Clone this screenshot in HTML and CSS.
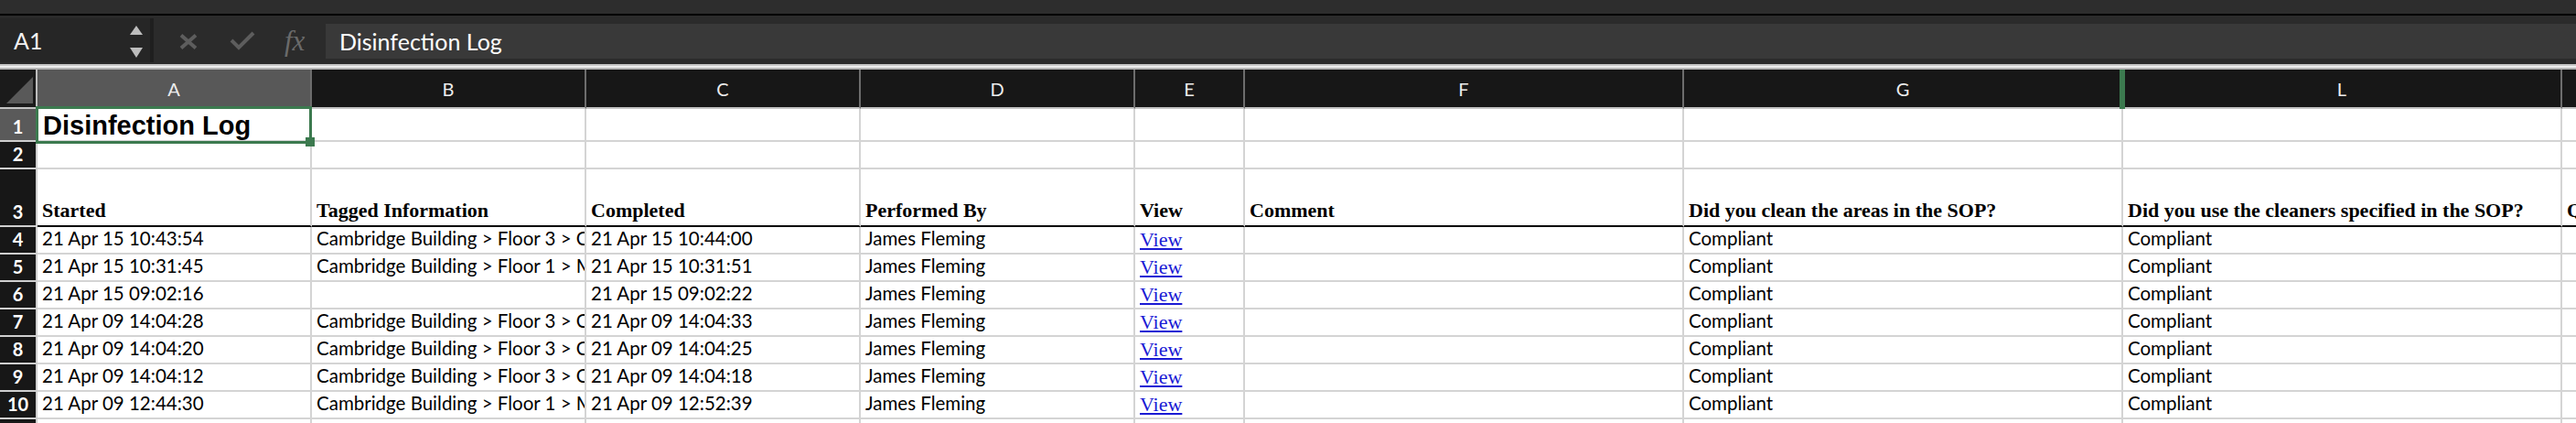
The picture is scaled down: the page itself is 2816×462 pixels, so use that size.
FILE: index.html
```html
<!DOCTYPE html>
<html>
<head>
<meta charset="utf-8">
<title>Disinfection Log</title>
<link rel="stylesheet" href="styles.css">
</head>
<body>
<div class="app">
  <div class="titlebar"></div>
  <div class="formula-bar">
    <div class="namebox">
      <span class="ref">A1</span>
      <svg class="spin" width="16" height="36" viewBox="0 0 16 36"><polygon points="8,0 15,10 1,10" fill="#bdbdbd"/><polygon points="1,24 15,24 8,35" fill="#bdbdbd"/></svg>
    </div>
    <div class="tools">
      <svg class="ico-x" width="20" height="17" viewBox="0 0 20 17"><path d="M2 1.5 L18 15.5 M18 1.5 L2 15.5" stroke="#5d5d5d" stroke-width="4" stroke-linecap="butt"/></svg>
      <svg class="ico-check" width="28" height="21" viewBox="0 0 28 21"><path d="M2 10 L10 18 L26 2" stroke="#5d5d5d" stroke-width="4" fill="none"/></svg>
      <span class="fx">fx</span>
    </div>
    <div class="formula-input">Disinfection Log</div>
  </div>
  <div class="splitter"></div>

  <div class="viewport">
  <div class="sheet">
    <!-- column headers -->
    <div class="corner"><svg width="41" height="41" viewBox="0 0 41 41"><polygon points="7,37 36,37 36,8" fill="#595959"/></svg></div>
    <div class="ch sel">A</div>
    <div class="ch">B</div>
    <div class="ch">C</div>
    <div class="ch">D</div>
    <div class="ch">E</div>
    <div class="ch">F</div>
    <div class="ch">G</div>
    <div class="ch mark">L</div>
    <div class="ch"></div>

    <!-- row 1 -->
    <div class="rh sel">1</div>
    <div class="c title active">Disinfection Log<span class="selbox"></span></div>
    <div class="c"></div><div class="c"></div><div class="c"></div><div class="c"></div><div class="c"></div><div class="c"></div><div class="c"></div><div class="c"></div>

    <!-- row 2 -->
    <div class="rh">2</div>
    <div class="c"></div><div class="c"></div><div class="c"></div><div class="c"></div><div class="c"></div><div class="c"></div><div class="c"></div><div class="c"></div><div class="c"></div>

    <!-- row 3 -->
    <div class="rh">3</div>
    <div class="c h">Started</div>
    <div class="c h">Tagged Information</div>
    <div class="c h">Completed</div>
    <div class="c h">Performed By</div>
    <div class="c h">View</div>
    <div class="c h">Comment</div>
    <div class="c h">Did you clean the areas in the SOP?</div>
    <div class="c h">Did you use the cleaners specified in the SOP?</div>
    <div class="c h">Q</div>

    <!-- row 4 -->
    <div class="rh">4</div>
    <div class="c">21 Apr 15 10:43:54</div>
    <div class="c">Cambridge Building &gt; Floor 3 &gt; Co</div>
    <div class="c">21 Apr 15 10:44:00</div>
    <div class="c">James Fleming</div>
    <div class="c lk"><a href="#" class="link">View</a></div>
    <div class="c"></div>
    <div class="c">Compliant</div>
    <div class="c">Compliant</div>
    <div class="c"></div>

    <!-- row 5 -->
    <div class="rh">5</div>
    <div class="c">21 Apr 15 10:31:45</div>
    <div class="c">Cambridge Building &gt; Floor 1 &gt; M</div>
    <div class="c">21 Apr 15 10:31:51</div>
    <div class="c">James Fleming</div>
    <div class="c lk"><a href="#" class="link">View</a></div>
    <div class="c"></div>
    <div class="c">Compliant</div>
    <div class="c">Compliant</div>
    <div class="c"></div>

    <!-- row 6 -->
    <div class="rh">6</div>
    <div class="c">21 Apr 15 09:02:16</div>
    <div class="c"></div>
    <div class="c">21 Apr 15 09:02:22</div>
    <div class="c">James Fleming</div>
    <div class="c lk"><a href="#" class="link">View</a></div>
    <div class="c"></div>
    <div class="c">Compliant</div>
    <div class="c">Compliant</div>
    <div class="c"></div>

    <!-- row 7 -->
    <div class="rh">7</div>
    <div class="c">21 Apr 09 14:04:28</div>
    <div class="c">Cambridge Building &gt; Floor 3 &gt; Co</div>
    <div class="c">21 Apr 09 14:04:33</div>
    <div class="c">James Fleming</div>
    <div class="c lk"><a href="#" class="link">View</a></div>
    <div class="c"></div>
    <div class="c">Compliant</div>
    <div class="c">Compliant</div>
    <div class="c"></div>

    <!-- row 8 -->
    <div class="rh">8</div>
    <div class="c">21 Apr 09 14:04:20</div>
    <div class="c">Cambridge Building &gt; Floor 3 &gt; Co</div>
    <div class="c">21 Apr 09 14:04:25</div>
    <div class="c">James Fleming</div>
    <div class="c lk"><a href="#" class="link">View</a></div>
    <div class="c"></div>
    <div class="c">Compliant</div>
    <div class="c">Compliant</div>
    <div class="c"></div>

    <!-- row 9 -->
    <div class="rh">9</div>
    <div class="c">21 Apr 09 14:04:12</div>
    <div class="c">Cambridge Building &gt; Floor 3 &gt; Co</div>
    <div class="c">21 Apr 09 14:04:18</div>
    <div class="c">James Fleming</div>
    <div class="c lk"><a href="#" class="link">View</a></div>
    <div class="c"></div>
    <div class="c">Compliant</div>
    <div class="c">Compliant</div>
    <div class="c"></div>

    <!-- row 10 -->
    <div class="rh">10</div>
    <div class="c">21 Apr 09 12:44:30</div>
    <div class="c">Cambridge Building &gt; Floor 1 &gt; M</div>
    <div class="c">21 Apr 09 12:52:39</div>
    <div class="c">James Fleming</div>
    <div class="c lk"><a href="#" class="link">View</a></div>
    <div class="c"></div>
    <div class="c">Compliant</div>
    <div class="c">Compliant</div>
    <div class="c"></div>

    <!-- row 11 (partially visible) -->
    <div class="rh"></div>
    <div class="c"></div><div class="c"></div><div class="c"></div><div class="c"></div><div class="c"></div><div class="c"></div><div class="c"></div><div class="c"></div><div class="c"></div>
  </div>
  </div>
</div>
</body>
</html>
```

FILE: styles.css
```css
html, body {
  margin: 0;
  padding: 0;
}
body {
  width: 2816px;
  height: 462px;
  overflow: hidden;
  background: #ffffff;
  font-family: Lato, "Noto Sans", sans-serif;
}
.app {
  width: 2816px;
  height: 462px;
  display: flex;
  flex-direction: column;
  overflow: hidden;
}

/* window title strip */
.titlebar {
  height: 15px;
  flex: none;
  background: #2d2d2d;
  border-bottom: 2px solid #000;
}

/* formula bar */
.formula-bar {
  height: 53px;
  flex: none;
  background: #2b2b2b;
  display: flex;
}
.namebox {
  box-sizing: border-box;
  width: 168px;
  margin-top: 3px;
  height: 48px;
  background: #262626;
  border-right: 4px solid #1f1f1f;
  display: flex;
  align-items: center;
  justify-content: space-between;
  padding: 0 7px 0 15px;
  color: #f2f2f2;
  font-size: 25px;
}
.namebox .spin {
  margin-top: 4px;
}
.tools {
  width: 188px;
  display: flex;
  align-items: center;
  padding-left: 28px;
  box-sizing: border-box;
}
.ico-x {
  margin-top: 4px;
}
.ico-check {
  margin-left: 35px;
  margin-top: 2px;
}
.fx {
  margin-left: 32px;
  font-family: "Liberation Serif", serif;
  font-style: italic;
  font-size: 31px;
  color: #6a6a6a;
  line-height: 1;
  margin-top: 2px;
}
.formula-input {
  flex: 1;
  margin: 9px 0 6px;
  background: #393939;
  color: #ffffff;
  font-size: 25px;
  display: flex;
  align-items: center;
  padding-left: 15px;
}
.splitter {
  height: 6px;
  flex: none;
  background: linear-gradient(#c8c8c8 0 2px, #eeeeee 2px 4px, #b4b4b4 4px 6px);
}

/* grid */
.viewport {
  flex: 1;
  overflow: hidden;
}
.sheet {
  display: grid;
  grid-template-columns: 41px 300px 300px 300px 300px 120px 480px 480px 480px 300px;
  grid-template-rows: 43px 36px 30px 63px repeat(8, 30px);
  width: 3101px;
}
.corner {
  background: #1b1b1b;
  border-right: 2px solid #bdbdbd;
  border-bottom: 2px solid #c4c4c4;
  box-sizing: border-box;
  overflow: hidden;
}
.corner svg {
  display: block;
}
.ch {
  position: relative;
  box-sizing: border-box;
  background: #171717;
  color: #ececec;
  font-size: 20px;
  display: flex;
  align-items: center;
  justify-content: center;
  border-right: 2px solid #6d6d6d;
  border-bottom: 2px solid #c4c4c4;
}
.ch.sel {
  background: #585858;
}
.ch.mark::before {
  content: "";
  position: absolute;
  left: -4px;
  top: 0;
  bottom: -2px;
  width: 6px;
  background: #3c7a4f;
}
.rh {
  box-sizing: border-box;
  background: #171717;
  color: #ffffff;
  font-size: 20px;
  font-weight: bold;
  line-height: 22px;
  display: flex;
  align-items: flex-end;
  justify-content: center;
  padding-bottom: 4px;
  border-right: 2px solid #cfcfcf;
  border-bottom: 2px solid #cfcfcf;
}
.rh.sel {
  background: #5a5a5a;
}
.c {
  box-sizing: border-box;
  position: relative;
  background: #ffffff;
  color: #000000;
  border-right: 2px solid #d4d4d4;
  border-bottom: 2px solid #d4d4d4;
  white-space: nowrap;
  overflow: hidden;
  display: flex;
  align-items: flex-end;
  padding: 0 4px 5px 5px;
  font-size: 20.5px;
  line-height: 22px;
}
.c.active {
  overflow: visible;
  z-index: 2;
}
.c.title {
  font-family: "Liberation Sans", Arial, sans-serif;
  font-weight: bold;
  font-size: 29px;
  line-height: 32px;
  padding-bottom: 0;
  padding-left: 6px;
}
.selbox {
  position: absolute;
  left: -2px;
  top: -3px;
  width: 302px;
  height: 41px;
  box-sizing: border-box;
  border: 3px solid #3c7a4f;
  pointer-events: none;
}
.selbox::after {
  content: "";
  position: absolute;
  right: -6px;
  bottom: -6px;
  width: 10px;
  height: 10px;
  background: #3c7a4f;
}
.c.h {
  font-family: "Liberation Serif", "Times New Roman", serif;
  font-weight: bold;
  font-size: 22px;
  line-height: 24px;
  padding-bottom: 4px;
  border-bottom-color: #000000;
}
.c.lk {
  padding-bottom: 2px;
  line-height: 24px;
}
.link {
  font-family: "Liberation Serif", "Times New Roman", serif;
  font-size: 22px;
  color: #1a1ad4;
  text-decoration: underline;
}
```
